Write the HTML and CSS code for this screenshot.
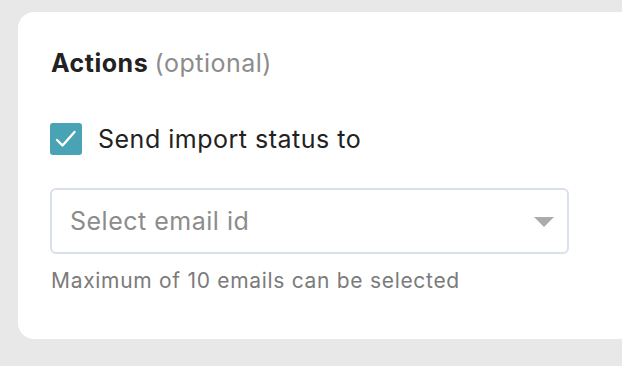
FILE: index.html
```html
<!DOCTYPE html>
<html>
<head>
<meta charset="utf-8">
<link rel="stylesheet" href="styles.css">
</head>
<body>
<div class="card">
  <h2 class="title">Actions <span class="optional">(optional)</span></h2>
  <label class="check-row">
    <span class="checkbox">
      <svg width="32" height="32" viewBox="0 0 32 32"><path d="M7 17 L12.5 22.5 L24.5 9" fill="none" stroke="#fff" stroke-width="2.4" stroke-linecap="round" stroke-linejoin="round"/></svg>
    </span>
    <span class="check-label">Send import status to</span>
  </label>
  <div class="select">
    <span class="placeholder">Select email id</span>
    <span class="arrow"></span>
  </div>
  <p class="hint">Maximum of 10 emails can be selected</p>
</div>
</body>
</html>
```
FILE: styles.css
```css
html, body {
  margin: 0;
  padding: 0;
}
body {
  background: #e8e8e8;
  font-family: "Inter", "Liberation Sans", sans-serif;
  width: 622px;
  height: 366px;
  overflow: hidden;
}
.card {
  margin: 12px 0 0 18px;
  width: 620px;
  height: 327px;
  box-sizing: border-box;
  background: #fff;
  border-radius: 16px 0 0 16px;
  padding: 36px 0 0 33px;
  display: flex;
  flex-direction: column;
}
.title {
  margin: 0;
  font-size: 25px;
  line-height: 30px;
  letter-spacing: 0.5px;
  font-weight: 700;
  color: #222;
}
.optional {
  font-weight: 400;
  color: #8c8c8c;
}
.check-row {
  display: flex;
  align-items: center;
  gap: 16px;
  margin-top: 45px;
  height: 32px;
}
.checkbox {
  width: 32px;
  height: 32px;
  border-radius: 3px;
  background: #4aa3b4;
  display: flex;
  margin-left: -1px;
  flex: none;
}
.check-label {
  font-size: 25px;
  line-height: 30px;
  letter-spacing: 0.5px;
  color: #222;
}
.select {
  margin-top: 33px;
  margin-left: -1px;
  width: 519px;
  height: 66px;
  box-sizing: border-box;
  border: 2px solid #dadfed;
  border-radius: 6px;
  display: flex;
  align-items: center;
  justify-content: space-between;
  padding: 0 13px 0 18px;
  flex: none;
}
.placeholder {
  font-size: 25px;
  line-height: 30px;
  letter-spacing: 0.5px;
  color: #8c8c8c;
}
.arrow {
  width: 0;
  height: 0;
  margin-top: 1px;
  border-left: 10px solid transparent;
  border-right: 10px solid transparent;
  border-top: 10px solid #ababab;
}
.hint {
  margin: 13px 0 0;
  font-size: 21px;
  line-height: 27px;
  letter-spacing: 0.7px;
  color: #7b7b7b;
}
```
